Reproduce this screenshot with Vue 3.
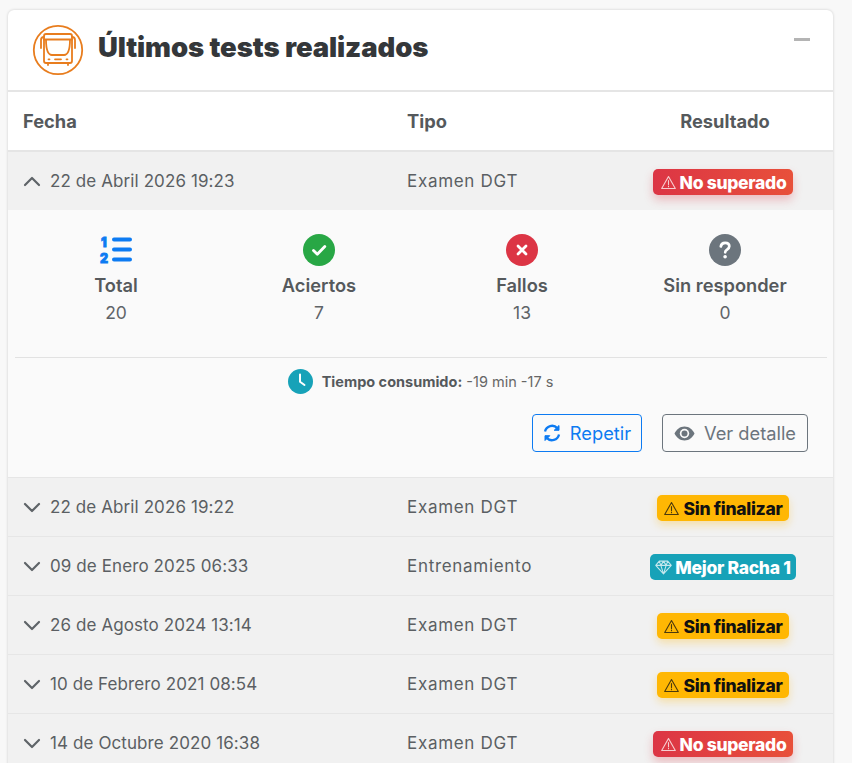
<script setup>
const rows = [
  { date: '22 de Abril 2026 19:22', type: 'Examen DGT', result: 'Sin finalizar', kind: 'warn' },
  { date: '09 de Enero 2025 06:33', type: 'Entrenamiento', result: 'Mejor Racha 1', kind: 'info' },
  { date: '26 de Agosto 2024 13:14', type: 'Examen DGT', result: 'Sin finalizar', kind: 'warn' },
  { date: '10 de Febrero 2021 08:54', type: 'Examen DGT', result: 'Sin finalizar', kind: 'warn' },
  { date: '14 de Octubre 2020 16:38', type: 'Examen DGT', result: 'No superado', kind: 'danger' }
]
</script>

<template>
  <div class="page">
    <section class="card">
      <header class="card-head">
        <svg class="bus" width="52" height="52" viewBox="0 0 52 52" fill="none" stroke="#e87d1e" stroke-width="1.800" stroke-linecap="round" stroke-linejoin="round">
          <circle cx="26" cy="26" r="24.200" />
          <path d="M14 10h24a2 2 0 0 1 2 2v25a2 2 0 0 1-2 2H14a2 2 0 0 1-2-2V12a2 2 0 0 1 2-2z" />
          <path d="M12 15.500h28M14 15.500c0 8 1 15.500 6 15.500h12c5 0 6-7.500 6-15.500" />
          <path d="M12 13c-2 0-3 1-3 3v8M40 13c2 0 3 1 3 3v8" />
          <path d="M16 39v2M36 39v2M23 35.300h6M16.500 35.300h1M34.500 35.300h1" />
        </svg>
        <h2>Últimos tests realizados</h2>
        <span class="collapse"></span>
      </header>

      <div class="row table-head">
        <div>Fecha</div>
        <div>Tipo</div>
        <div class="center">Resultado</div>
      </div>

      <div class="row item open">
        <div class="date">
          <svg class="chev" width="18" height="11" viewBox="0 0 18 11" fill="none" stroke="#5f6468" stroke-width="2.200" stroke-linecap="round" stroke-linejoin="round"><path d="M2 9l7-7 7 7" /></svg>
          22 de Abril 2026 19:23
        </div>
        <div class="type">Examen DGT</div>
        <div class="center">
          <span class="badge danger">
            <svg width="17" height="15" viewBox="0 0 16 15" fill="none" stroke="currentColor" stroke-width="1.100" stroke-linejoin="round" class="tri"><path d="M8 1.500l6.800 12H1.200z" /><path d="M8 5.500v4M8 11v.8" stroke-linecap="round" /></svg>
            No superado
          </span>
        </div>
      </div>

      <div class="details">
        <div class="stats">
          <div class="stat">
            <svg width="34" height="32" viewBox="0 0 34 32" fill="#0d7bf2">
              <rect x="13" y="3.500" width="20" height="4" rx="2" />
              <rect x="13" y="13.500" width="20" height="4" rx="2" />
              <rect x="13" y="23.500" width="20" height="4" rx="2" />
              <text x="2" y="12.500" class="num">1</text>
              <text x="1" y="28.500" class="num">2</text>
            </svg>
            <strong>Total</strong>
            <span>20</span>
          </div>
          <div class="stat">
            <svg width="32" height="32" viewBox="0 0 32 32">
              <circle cx="16" cy="16" r="16" fill="#28a745" />
              <path d="M10.500 16.500l3.800 3.800 7.500-7.800" fill="none" stroke="#fff" stroke-width="2.800" stroke-linecap="round" stroke-linejoin="round" />
            </svg>
            <strong>Aciertos</strong>
            <span>7</span>
          </div>
          <div class="stat">
            <svg width="32" height="32" viewBox="0 0 32 32">
              <circle cx="16" cy="16" r="16" fill="#dc3545" />
              <path d="M12 12l8 8M20 12l-8 8" fill="none" stroke="#fff" stroke-width="2.800" stroke-linecap="round" />
            </svg>
            <strong>Fallos</strong>
            <span>13</span>
          </div>
          <div class="stat">
            <svg width="32" height="32" viewBox="0 0 32 32">
              <circle cx="16" cy="16" r="16" fill="#6c757d" />
              <path d="M11.800 12.500c.3-2.400 2-3.700 4.300-3.700 2.500 0 4.200 1.400 4.200 3.500 0 1.700-1 2.500-2.200 3.300-1.200.8-1.900 1.300-1.900 2.700" fill="none" stroke="#fff" stroke-width="2.700" stroke-linecap="round" />
              <circle cx="16.100" cy="22.800" r="1.800" fill="#fff" />
            </svg>
            <strong>Sin responder</strong>
            <span>0</span>
          </div>
        </div>

        <div class="time">
          <svg width="25" height="25" viewBox="0 0 25 25">
            <circle cx="12.500" cy="12.500" r="12.500" fill="#17a2b8" />
            <path d="M12 5.500v7.200l4.500 3.300" fill="none" stroke="#fff" stroke-width="2" stroke-linecap="round" stroke-linejoin="round" />
          </svg>
          <p><b>Tiempo consumido:</b> -19 min -17 s</p>
        </div>

        <div class="actions">
          <button class="btn blue">
            <svg width="18" height="18" viewBox="0 0 18 18" fill="none" stroke="currentColor" stroke-width="2.300" stroke-linejoin="round">
              <path d="M2 7.500a7.200 7.200 0 0 1 12.300-3.400" />
              <path d="M16 10.500a7.200 7.200 0 0 1-12.300 3.400" />
              <path d="M16 1.500v4.800h-4.800z" fill="currentColor" stroke-width="1" />
              <path d="M2 16.500v-4.800h4.800z" fill="currentColor" stroke-width="1" />
            </svg>
            Repetir
          </button>
          <button class="btn grey">
            <svg width="21" height="15" viewBox="0 0 21 15">
              <path d="M10.500.5C6 .5 2.500 3.300.5 7.500c2 4.200 5.500 7 10 7s8-2.800 10-7c-2-4.200-5.500-7-10-7z" fill="#6c757d" />
              <circle cx="10.500" cy="7.500" r="4.700" fill="#fafafa" />
              <circle cx="10.500" cy="7.500" r="3" fill="#6c757d" />
            </svg>
            Ver detalle
          </button>
        </div>
      </div>

      <div v-for="r in rows" :key="r.date" class="row item">
        <div class="date">
          <svg class="chev" width="18" height="11" viewBox="0 0 18 11" fill="none" stroke="#5f6468" stroke-width="2.200" stroke-linecap="round" stroke-linejoin="round"><path d="M2 2l7 7 7-7" /></svg>
          {{ r.date }}
        </div>
        <div class="type">{{ r.type }}</div>
        <div class="center">
          <span class="badge" :class="r.kind">
            <svg v-if="r.kind === 'info'" width="17" height="15" viewBox="0 0 16 14" fill="none" stroke="currentColor" stroke-width="1" stroke-linejoin="round" class="tri"><path d="M4 1h8l3.300 4L8 13 .7 5zM.7 5h14.600M5.500 5L8 13l2.500-8M4 1l1.500 4L8 1l2.500 4L12 1" /></svg>
            <svg v-else width="17" height="15" viewBox="0 0 16 15" fill="none" stroke="currentColor" stroke-width="1.100" stroke-linejoin="round" class="tri"><path d="M8 1.500l6.800 12H1.200z" /><path d="M8 5.500v4M8 11v.8" stroke-linecap="round" /></svg>
            {{ r.result }}
          </span>
        </div>
      </div>
    </section>
  </div>
</template>

<style scoped>
.page {
  height: 763px;
  overflow: hidden;
  box-sizing: border-box;
  padding: 10px 19px 0 8px;
  background: #f8f8f8;
  font-family: Inter, "Liberation Sans", sans-serif;
  color: #5b5f63;
}
.card {
  background: #fff;
  border-radius: 6px 6px 0 0;
  box-shadow: 0 0 3px rgba(0, 0, 0, 0.18);
}
.card-head {
  position: relative;
  display: flex;
  align-items: center;
  gap: 14px;
  height: 80px;
  padding-left: 24px;
  border-bottom: 2px solid #e5e5e5;
}
.bus { flex-shrink: 0; margin-top: -1px; }
h2 {
  margin: -6px 0 0;
  font-size: 27.500px;
  font-weight: 900;
  letter-spacing: -0.1px;
  color: #34373a;
}
.collapse {
  position: absolute;
  top: 28px;
  right: 23px;
  width: 16px;
  height: 3px;
  background: #b4b4b4;
}
.row {
  display: grid;
  grid-template-columns: 384px 225px 216px;
  align-items: center;
  font-size: 17px;
}
.row > div:first-child { padding-left: 15px; }
.row > div:nth-child(2) { padding-left: 15px; }
.center { text-align: center; }
.table-head {
  height: 58px;
  border-bottom: 2px solid #e5e5e5;
  font-size: 18.300px;
  font-weight: 700;
  color: #55595c;
}
.item {
  height: 58px;
  background: #f1f1f1;
  border-bottom: 1px solid #e6e6e6;
}
.item.open { border-bottom: 0; }
.date {
  display: flex;
  align-items: center;
  gap: 9px;
  letter-spacing: 0.1px;
}
.type { letter-spacing: 0.7px; }
.badge {
  display: inline-flex;
  align-items: center;
  gap: 3px;
  height: 26px;
  margin: 2px 4px 0 0;
  padding: 0 7px;
  border-radius: 5px;
  font-size: 17.500px;
  font-weight: 800;
  letter-spacing: -0.3px;
  white-space: nowrap;
}
.tri { flex-shrink: 0; opacity: 0.75; }
.danger {
  color: #fff;
  background: linear-gradient(90deg, #dc3545, #e8503a);
  box-shadow: 0 5px 10px rgba(220, 53, 69, 0.28);
}
.warn {
  padding: 0 6px;
  color: #111;
  background: #ffb703;
  box-shadow: 0 4px 9px rgba(255, 183, 3, 0.3);
}
.info {
  padding: 0 5px;
  color: #fff;
  background: #17a2b8;
}
.details {
  height: 268px;
  box-sizing: border-box;
  padding: 24px 6.500px 0;
  background: #fafafa;
  border-bottom: 1px solid #e6e6e6;
}
.stats {
  display: grid;
  grid-template-columns: repeat(4, 1fr);
  height: 123px;
  border-bottom: 1px solid #e2e2e2;
}
.stat {
  display: flex;
  flex-direction: column;
  align-items: center;
}
.stat strong {
  margin-top: 7px;
  font-size: 18.300px;
  font-weight: 600;
  line-height: 24px;
  color: #55595c;
}
.stat span {
  margin-top: 4px;
  font-size: 17.500px;
  line-height: 24px;
  color: #5f6468;
}
.num {
  font-family: Inter, sans-serif;
  font-size: 12.500px;
  font-weight: 900;
  stroke: #0d7bf2;
  stroke-width: 0.8px;
}
.time {
  display: flex;
  align-items: center;
  justify-content: center;
  gap: 9px;
  margin-top: 11px;
}
.time p {
  margin: 0;
  font-size: 14.500px;
  color: #666;
}
.time b {
  font-weight: 700;
  color: #55595c;
}
.actions {
  display: flex;
  justify-content: flex-end;
  gap: 20px;
  margin-top: 20px;
  padding-right: 18.500px;
}
.btn {
  display: inline-flex;
  align-items: center;
  justify-content: center;
  gap: 9px;
  height: 38px;
  padding: 0;
  background: transparent;
  border-radius: 4px;
  font-family: inherit;
  font-size: 18.300px;
}
.blue {
  width: 110px;
  color: #0d7bf2;
  border: 1px solid #0d7bf2;
}
.grey {
  width: 146px;
  color: #6c757d;
  border: 1px solid #6c757d;
}
</style>
